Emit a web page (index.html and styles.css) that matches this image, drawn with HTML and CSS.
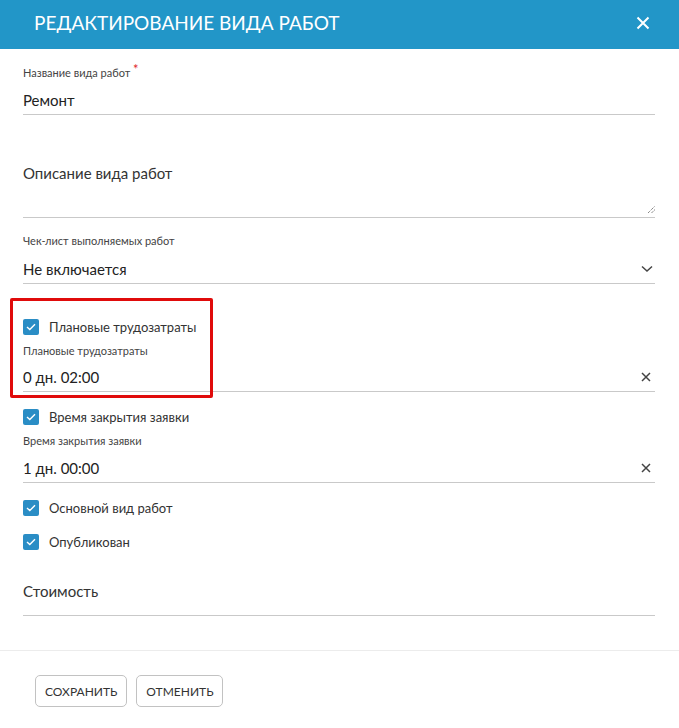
FILE: index.html
```html
<!DOCTYPE html>
<html lang="ru">
<head>
<meta charset="utf-8">
<link rel="stylesheet" href="styles.css">
</head>
<body>
<div class="dialog">
  <header class="head">
    <h1 class="title">РЕДАКТИРОВАНИЕ ВИДА РАБОТ</h1>
    <svg class="close" width="14" height="14" viewBox="0 0 14 14"><path d="M1.5 1.5L12.5 12.5M12.5 1.5L1.5 12.5" stroke="#fff" stroke-width="2" fill="none"/></svg>
  </header>
  <div class="body">
    <div class="field f-name">
      <div class="label">Название вида работ <span class="req">*</span></div>
      <div class="input"><span class="value">Ремонт</span></div>
    </div>
    <div class="field f-desc">
      <div class="textarea"><span class="placeholder">Описание вида работ</span>
        <svg class="grip" width="8" height="8" viewBox="0 0 8 8"><path d="M1 8L8 1M4.5 8L8 4.5" stroke="#555" stroke-width="1" stroke-dasharray="1 1" fill="none"/></svg>
      </div>
    </div>
    <div class="field f-check">
      <div class="label">Чек-лист выполняемых работ</div>
      <div class="input"><span class="value">Не включается</span>
        <svg class="icon" width="12" height="8" viewBox="0 0 12 8"><path d="M1 1.5L6 6L11 1.5" stroke="#444" stroke-width="1.5" fill="none"/></svg>
      </div>
    </div>
    <div class="group highlight">
      <label class="cb"><span class="box"><svg width="10" height="8" viewBox="0 0 10 8"><path d="M1 4L3.8 6.6L9 1.2" stroke="#fff" stroke-width="1.4" fill="none"/></svg></span>Плановые трудозатраты</label>
      <div class="field f-time">
        <div class="label">Плановые трудозатраты</div>
        <div class="input"><span class="value">0 дн. 02:00</span>
          <svg class="icon" width="10" height="10" viewBox="0 0 10 10"><path d="M1 1L9 9M9 1L1 9" stroke="#444" stroke-width="1.5" fill="none"/></svg>
        </div>
      </div>
    </div>
    <div class="group second">
      <label class="cb"><span class="box"><svg width="10" height="8" viewBox="0 0 10 8"><path d="M1 4L3.8 6.6L9 1.2" stroke="#fff" stroke-width="1.4" fill="none"/></svg></span>Время закрытия заявки</label>
      <div class="field f-time">
        <div class="label">Время закрытия заявки</div>
        <div class="input"><span class="value">1 дн. 00:00</span>
          <svg class="icon" width="10" height="10" viewBox="0 0 10 10"><path d="M1 1L9 9M9 1L1 9" stroke="#444" stroke-width="1.5" fill="none"/></svg>
        </div>
      </div>
    </div>
    <label class="cb cb-main"><span class="box"><svg width="10" height="8" viewBox="0 0 10 8"><path d="M1 4L3.8 6.6L9 1.2" stroke="#fff" stroke-width="1.4" fill="none"/></svg></span>Основной вид работ</label>
    <label class="cb cb-pub"><span class="box"><svg width="10" height="8" viewBox="0 0 10 8"><path d="M1 4L3.8 6.6L9 1.2" stroke="#fff" stroke-width="1.4" fill="none"/></svg></span>Опубликован</label>
    <div class="field f-cost">
      <div class="input"><span class="placeholder">Стоимость</span></div>
    </div>
  </div>
  <footer class="foot">
    <button class="btn">СОХРАНИТЬ</button>
    <button class="btn">ОТМЕНИТЬ</button>
  </footer>
</div>
</body>
</html>
```
FILE: styles.css
```css
* { box-sizing: border-box; }
html, body { margin: 0; padding: 0; background: #fff; }
body { font-family: Lato, "Open Sans", sans-serif; color: #222; width: 679px; height: 728px; overflow: hidden; }

.head {
  height: 49px;
  background: #2296c8;
  display: flex;
  align-items: center;
  justify-content: space-between;
  padding: 0 29px 4px 34px;
}
.title {
  margin: 0;
  color: #fff;
  font-size: 19px;
  font-weight: 400;
  line-height: 24px;
}
.close { display: block; }

.body { padding: 16px 24px 0 23px; }

.label { font-size: 11px; color: #444; line-height: 14px; height: 14px; }
.req { color: #e0262b; font-size: 13px; position: relative; top: -3px; }

.input {
  display: flex;
  align-items: center;
  justify-content: space-between;
  border-bottom: 1px solid #c9c9c9;
  height: 31px;
  padding: 2px 3px 0 0;
}
.value, .placeholder { font-size: 15px; color: #222; line-height: 20px; }
.placeholder { color: #333; }

.field .label + .input { margin-top: 5px; }

.f-desc { margin-top: 45px; }
.textarea {
  position: relative;
  border-bottom: 1px solid #c9c9c9;
  height: 58px;
  padding-top: 3px;
}
.grip { position: absolute; right: 0; bottom: 4px; }

.f-check { margin-top: 16px; }
.f-check .input { padding-right: 2px; }

.group { position: relative; }
.highlight { padding-top: 35px; }
.second { padding-top: 17px; }
.highlight::before {
  content: "";
  position: absolute;
  left: -13px;
  top: 14px;
  width: 197px;
  height: 94px;
  border: 3px solid #e00b0b;
  border-radius: 2px;
}

.cb {
  display: flex;
  align-items: center;
  font-size: 13px;
  color: #333;
  height: 16px;
}
.box {
  width: 16px;
  height: 16px;
  border-radius: 2px;
  background: #2a8dc5;
  display: flex;
  align-items: center;
  justify-content: center;
  margin-right: 10px;
  flex: none;
}
.f-time .label { margin-top: 9px; }
.field.f-time .label + .input { margin-top: 3px; padding-right: 4px; }
.second .field.f-time .label + .input { margin-top: 4px; }

.cb-main { margin-top: 17px; }
.cb-pub { margin-top: 18px; }

.f-cost { margin-top: 31px; }
.f-cost .input { height: 35px; align-items: flex-start; padding-top: 0; }

.foot {
  margin-top: 34px;
  border-top: 1px solid #ececec;
  padding: 24px 0 0 35px;
  display: flex;
  gap: 9px;
}
.btn {
  font-family: inherit;
  font-size: 12px;
  color: #333;
  background: #fff;
  border: 1px solid #c2c2c2;
  border-radius: 5px;
  height: 32px;
  padding: 0 9px;
}
```
